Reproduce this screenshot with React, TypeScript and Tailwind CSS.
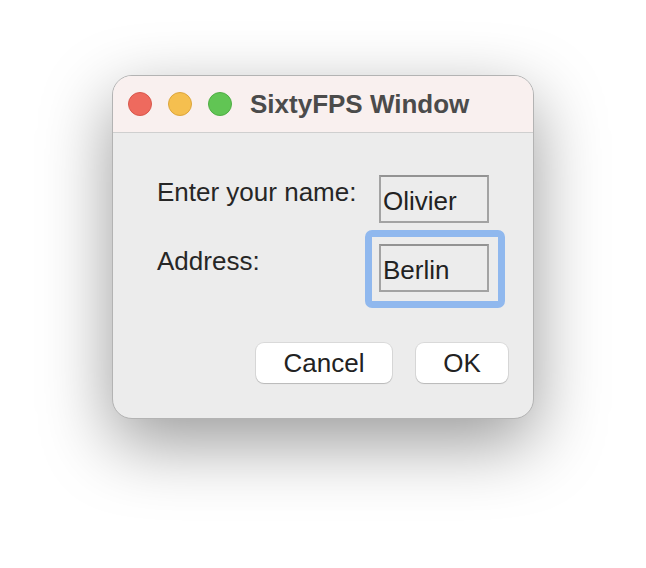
import React from 'react'

const font = { fontFamily: '"Liberation Sans", Arial, sans-serif' }

function TrafficLights() {
  return (
    <div className="flex items-center gap-4">
      <span className="h-6 w-6 rounded-full bg-[#ee6a5e] border border-[#d8574c]" />
      <span className="h-6 w-6 rounded-full bg-[#f5bf4f] border border-[#dca53c]" />
      <span className="h-6 w-6 rounded-full bg-[#61c554] border border-[#4fad44]" />
    </div>
  )
}

function Field({ value, focused }: { value: string; focused?: boolean }) {
  return (
    <div className="relative w-[110px]">
      {focused && (
        <div className="absolute -left-[14px] -top-[14px] -right-[16px] -bottom-[16px] rounded-[7px] border-[7px] border-[#90b8ee] pointer-events-none" />
      )}
      <div className="h-[48px] w-[110px] border-2 border-[#a3a3a3] border-t-[#939393] pl-[2px] pt-[9px] text-[26px] leading-[30px] text-[#222222]">
        {value}
      </div>
    </div>
  )
}

export default function App() {
  return (
    <div className="min-h-screen w-full bg-white flex justify-center pt-[75px]" style={font}>
      <div className="w-[422px] h-[344px] flex flex-col rounded-[20px] border border-[#b3b3b3] bg-[#ececec] overflow-hidden shadow-[0_24px_70px_rgba(0,0,0,0.4)]">
        {/* Title bar */}
        <header className="h-[57px] shrink-0 flex items-center pl-[15px] bg-[#f9f0ef] border-b border-[#cfcfcf]">
          <TrafficLights />
          <h1 className="ml-[18px] text-[26px] leading-[30px] font-bold text-[#4b4b4b]">SixtyFPS Window</h1>
        </header>

        <main className="flex-1 flex flex-col pt-[42px]">
          <div className="grid grid-cols-[1fr_110px] gap-y-[21px] pl-[44px] pr-[44px]">
            <span className="mt-[2px] text-[26px] leading-[30px] text-[#262626]">Enter your name:</span>
            <Field value="Olivier" />
            <span className="mt-[2px] text-[26px] leading-[30px] text-[#262626]">Address:</span>
            <Field value="Berlin" focused />
          </div>

          <div className="mt-[51px] flex justify-end gap-6 pr-[25px]">
            <button className="h-10 w-[136px] rounded-lg bg-white text-[26px] leading-[30px] text-[#222222] shadow-[0_0_0_1px_rgba(0,0,0,0.08),0_1px_1px_rgba(0,0,0,0.15)]">
              Cancel
            </button>
            <button className="h-10 w-[92px] rounded-lg bg-white text-[26px] leading-[30px] text-[#222222] shadow-[0_0_0_1px_rgba(0,0,0,0.08),0_1px_1px_rgba(0,0,0,0.15)]">
              OK
            </button>
          </div>
        </main>
      </div>
    </div>
  )
}
